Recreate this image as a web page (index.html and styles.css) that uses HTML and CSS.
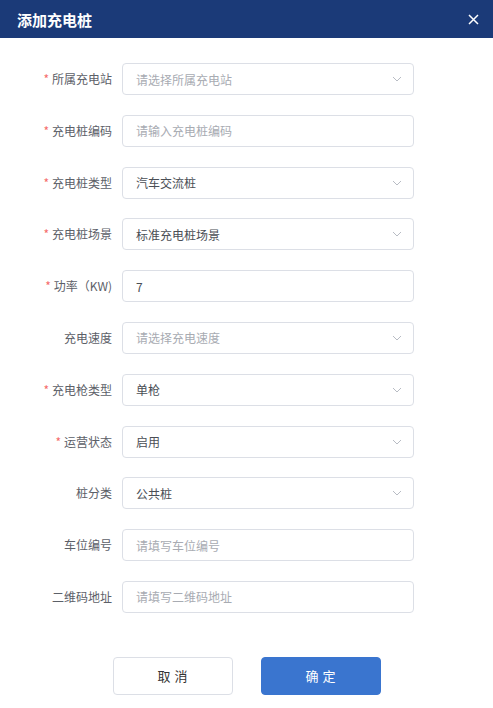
FILE: index.html
```html
<!DOCTYPE html>
<html lang="zh">
<head>
<meta charset="utf-8">
<link rel="stylesheet" href="styles.css">
</head>
<body>
<div class="dialog">
  <div class="header">
    <span class="title">添加充电桩</span>
    <span class="close">
      <svg width="11" height="11" viewBox="0 0 11 11"><path d="M1 1L10 10M10 1L1 10" stroke="#fff" stroke-width="1.5" fill="none"/></svg>
    </span>
  </div>
  <form class="form">
    <div class="row"><label class="label req">所属充电站</label><div class="field select"><span class="ph">请选择所属充电站</span><svg class="arrow" width="10" height="6" viewBox="0 0 10 6"><path d="M1 1L5 5L9 1" stroke="#b8bcc4" stroke-width="1" fill="none"/></svg></div></div>
    <div class="row"><label class="label req">充电桩编码</label><div class="field"><span class="ph">请输入充电桩编码</span></div></div>
    <div class="row"><label class="label req">充电桩类型</label><div class="field select"><span class="val">汽车交流桩</span><svg class="arrow" width="10" height="6" viewBox="0 0 10 6"><path d="M1 1L5 5L9 1" stroke="#b8bcc4" stroke-width="1" fill="none"/></svg></div></div>
    <div class="row"><label class="label req">充电桩场景</label><div class="field select"><span class="val">标准充电桩场景</span><svg class="arrow" width="10" height="6" viewBox="0 0 10 6"><path d="M1 1L5 5L9 1" stroke="#b8bcc4" stroke-width="1" fill="none"/></svg></div></div>
    <div class="row"><label class="label req">功率（KW)</label><div class="field"><span class="val">7</span></div></div>
    <div class="row"><label class="label">充电速度</label><div class="field select"><span class="ph">请选择充电速度</span><svg class="arrow" width="10" height="6" viewBox="0 0 10 6"><path d="M1 1L5 5L9 1" stroke="#b8bcc4" stroke-width="1" fill="none"/></svg></div></div>
    <div class="row"><label class="label req">充电枪类型</label><div class="field select"><span class="val">单枪</span><svg class="arrow" width="10" height="6" viewBox="0 0 10 6"><path d="M1 1L5 5L9 1" stroke="#b8bcc4" stroke-width="1" fill="none"/></svg></div></div>
    <div class="row"><label class="label req">运营状态</label><div class="field select"><span class="val">启用</span><svg class="arrow" width="10" height="6" viewBox="0 0 10 6"><path d="M1 1L5 5L9 1" stroke="#b8bcc4" stroke-width="1" fill="none"/></svg></div></div>
    <div class="row"><label class="label">桩分类</label><div class="field select"><span class="val">公共桩</span><svg class="arrow" width="10" height="6" viewBox="0 0 10 6"><path d="M1 1L5 5L9 1" stroke="#b8bcc4" stroke-width="1" fill="none"/></svg></div></div>
    <div class="row"><label class="label">车位编号</label><div class="field"><span class="ph">请填写车位编号</span></div></div>
    <div class="row"><label class="label">二维码地址</label><div class="field"><span class="ph">请填写二维码地址</span></div></div>
  </form>
  <div class="footer">
    <button class="btn cancel" type="button">取消</button>
    <button class="btn ok" type="button">确定</button>
  </div>
</div>
</body>
</html>
```
FILE: styles.css
```css
* { box-sizing: border-box; }
html, body { margin: 0; padding: 0; background: #fff; }
body {
  font-family: "Noto Sans CJK SC", "Liberation Sans", sans-serif;
  width: 493px;
  height: 708px;
  overflow: hidden;
}
.header {
  height: 38px;
  background: #1b3a78;
  display: flex;
  align-items: center;
  justify-content: space-between;
  padding: 0 14px 0 17px;
}
.title {
  color: #fff;
  font-size: 15px;
  font-weight: 700;
}
.close { display: flex; align-items: center; }
.form {
  padding: 25px 79px 0 0;
  display: flex;
  flex-direction: column;
  gap: 19.8px;
}
.row {
  display: grid;
  grid-template-columns: 1fr 292px;
  column-gap: 10px;
  align-items: center;
  height: 32px;
}
.label {
  text-align: right;
  font-size: 12px;
  line-height: 16px;
  color: #5c6068;
}
.label.req::before {
  content: "*";
  color: #f56c6c;
  margin-right: 3px;
}
.field {
  height: 32px;
  border: 1px solid #dcdfe6;
  border-radius: 4px;
  display: flex;
  align-items: center;
  justify-content: space-between;
  padding: 0 10px 0 13px;
  font-size: 12px;
}
.ph { color: #a8abb2; }
.val { color: #4a4e55; }
.arrow { margin-right: 1px; }
.footer {
  display: flex;
  justify-content: center;
  gap: 28px;
  margin-top: 44px;
}
.btn {
  width: 120px;
  height: 38px;
  border-radius: 4px;
  font-family: inherit;
  font-size: 13px;
  letter-spacing: 4px;
  text-indent: 4px;
  cursor: pointer;
}
.cancel {
  background: #fff;
  border: 1px solid #dcdfe6;
  color: #333;
}
.ok {
  background: #3a75cf;
  border: 1px solid #3a75cf;
  color: #fff;
}
```
